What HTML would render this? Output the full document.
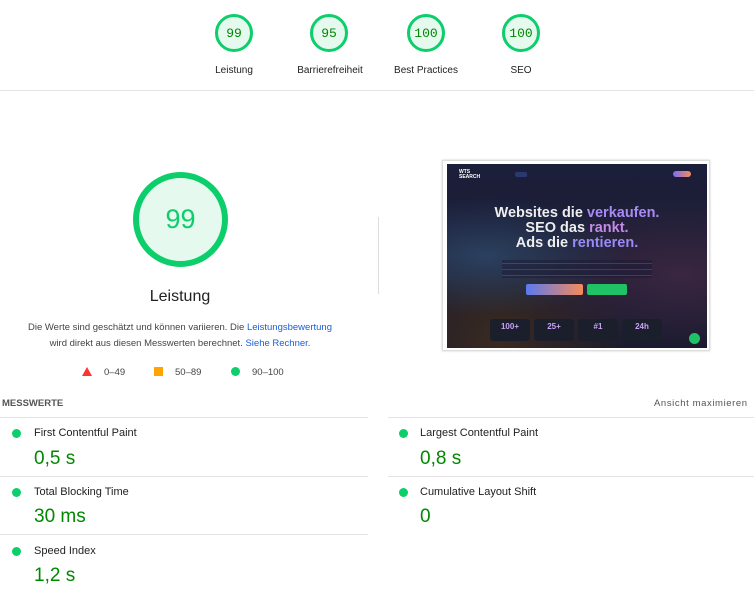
<!DOCTYPE html>
<html><head><meta charset="utf-8"><style>
*{margin:0;padding:0;box-sizing:border-box}
body{width:754px;height:596px;background:#fff;font-family:"Liberation Sans",sans-serif;position:relative;overflow:hidden;color:#212121}
.a{position:absolute}
.g{position:absolute;width:38px;height:38px;border-radius:50%;border:3px solid #0cce6b;background:#e5f9ee;color:#008800;font-family:"Liberation Mono",monospace;font-size:13px;display:flex;align-items:center;justify-content:center}
.gl{position:absolute;font-size:10px;color:#212121;text-align:center;width:120px}
.hr{position:absolute;height:1px;background:#e4e4e4}
.dot{position:absolute;width:9px;height:9px;border-radius:50%;background:#0cce6b}
.mt{position:absolute;font-size:11px;color:#212121}
.mv{position:absolute;font-size:19px;color:#008800}
</style></head><body>
<div class="g" style="left:215px;top:14px">99</div>
<div class="g" style="left:310px;top:14px">95</div>
<div class="g" style="left:407px;top:14px">100</div>
<div class="g" style="left:502px;top:14px">100</div>
<div class="gl" style="left:174px;top:65px">Leistung</div>
<div class="gl" style="left:270px;top:65px">Barrierefreiheit</div>
<div class="gl" style="left:366px;top:65px">Best Practices</div>
<div class="gl" style="left:461px;top:65px">SEO</div>
<div class="hr" style="left:0;top:90px;width:754px"></div>

<div class="a" style="left:133px;top:172px;width:95px;height:95px;border-radius:50%;border:6px solid #0cce6b;background:#e5f9ee;color:#0cce6b;font-size:27px;display:flex;align-items:center;justify-content:center">99</div>
<div class="a" style="left:0;top:288px;width:360px;text-align:center;font-size:16px;color:#212121">Leistung</div>
<div class="a" style="left:20px;top:320px;width:320px;text-align:center;font-size:9.5px;line-height:16px;color:#444">Die Werte sind geschätzt und können variieren. Die <span style="color:#1a5fd6">Leistungsbewertung</span><br>wird direkt aus diesen Messwerten berechnet. <span style="color:#1a5fd6">Siehe Rechner</span>.</div>
<div class="a" style="left:82px;top:367px;width:0;height:0;border-left:5px solid transparent;border-right:5px solid transparent;border-bottom:9px solid #f33"></div>
<div class="a" style="left:104px;top:367px;font-size:9.5px;color:#444">0–49</div>
<div class="a" style="left:154px;top:367px;width:9px;height:9px;background:#ffa400"></div>
<div class="a" style="left:175px;top:367px;font-size:9.5px;color:#444">50–89</div>
<div class="dot" style="left:231px;top:367px"></div>
<div class="a" style="left:252px;top:367px;font-size:9.5px;color:#444">90–100</div>

<div class="a" style="left:378px;top:217px;width:1px;height:77px;background:#ddd"></div>

<div class="a" style="left:442px;top:160px;width:268px;height:191px;border:1px solid #ddd;background:#fff;box-shadow:0 0 2px #ccc">
<div class="a" style="left:4px;top:3px;width:260px;height:184px;background:radial-gradient(ellipse at 15% 50%,#2a4060 0%,transparent 45%),radial-gradient(ellipse at 90% 60%,#3a2640 0%,transparent 50%),radial-gradient(ellipse at 20% 95%,#3a2a20 0%,transparent 45%),linear-gradient(#1c1f3a,#1a1a2e);overflow:hidden">
<div class="a" style="left:12px;top:6px;font-size:5px;color:#fff;font-weight:bold;line-height:5px">WTS<br>SEARCH</div>
<div class="a" style="left:68px;top:8px;width:12px;height:5px;background:#2a3a70;border-radius:2px"></div>
<div class="a" style="left:226px;top:7px;width:18px;height:6px;background:linear-gradient(90deg,#7b6cf6,#f58a5a);border-radius:3px"></div>
<div class="a" style="left:0;top:42px;width:260px;text-align:center;font-size:14.5px;line-height:15px;font-weight:bold;color:#eee">Websites die <span style="color:#a88af5">verkaufen.</span><br>SEO das <span style="color:#c38ae8">rankt.</span><br>Ads die <span style="color:#9a8af5">rentieren.</span></div>
<div class="a" style="left:55px;top:96px;width:150px;height:18px;background:repeating-linear-gradient(#1a1a35 0 3px,#55576a 3px 4px,#1a1a35 4px 6px);opacity:.5"></div>
<div class="a" style="left:79px;top:120px;width:57px;height:11px;background:linear-gradient(90deg,#5a7af0,#f58a5a);border-radius:2px"></div>
<div class="a" style="left:140px;top:120px;width:40px;height:11px;background:#1fc265;border-radius:2px"></div>
<div class="a" style="left:43px;top:155px;width:40px;height:22px;background:#1b1f2c;border-radius:3px;color:#c9a3f5;font-size:8px;font-weight:bold;text-align:center;padding-top:3px">100+</div>
<div class="a" style="left:87px;top:155px;width:40px;height:22px;background:#1b1f2c;border-radius:3px;color:#c9a3f5;font-size:8px;font-weight:bold;text-align:center;padding-top:3px">25+</div>
<div class="a" style="left:131px;top:155px;width:40px;height:22px;background:#1b1f2c;border-radius:3px;color:#c9a3f5;font-size:8px;font-weight:bold;text-align:center;padding-top:3px">#1</div>
<div class="a" style="left:175px;top:155px;width:40px;height:22px;background:#1b1f2c;border-radius:3px;color:#c9a3f5;font-size:8px;font-weight:bold;text-align:center;padding-top:3px">24h</div>
<div class="a" style="left:242px;top:169px;width:11px;height:11px;border-radius:50%;background:#1fc265"></div>
</div></div>

<div class="a" style="left:2px;top:398px;font-size:9.5px;font-weight:bold;color:#555">MESSWERTE</div>
<div class="a" style="left:654px;top:398px;font-size:9.5px;color:#555;letter-spacing:.6px">Ansicht maximieren</div>
<div class="hr" style="left:0;top:417px;width:368px"></div>
<div class="hr" style="left:388px;top:417px;width:366px"></div>

<div class="dot" style="left:12px;top:429px"></div><div class="mt" style="left:34px;top:427px">First Contentful Paint</div><div class="mv" style="left:34px;top:448px">0,5 s</div>
<div class="dot" style="left:399px;top:429px"></div><div class="mt" style="left:420px;top:427px">Largest Contentful Paint</div><div class="mv" style="left:420px;top:448px">0,8 s</div>
<div class="hr" style="left:0;top:476px;width:368px"></div>
<div class="hr" style="left:388px;top:476px;width:366px"></div>
<div class="dot" style="left:12px;top:488px"></div><div class="mt" style="left:34px;top:486px">Total Blocking Time</div><div class="mv" style="left:34px;top:506px">30 ms</div>
<div class="dot" style="left:399px;top:488px"></div><div class="mt" style="left:420px;top:486px">Cumulative Layout Shift</div><div class="mv" style="left:420px;top:506px">0</div>
<div class="hr" style="left:0;top:534px;width:368px"></div>
<div class="dot" style="left:12px;top:547px"></div><div class="mt" style="left:34px;top:545px">Speed Index</div><div class="mv" style="left:34px;top:565px">1,2 s</div>
</body></html>
